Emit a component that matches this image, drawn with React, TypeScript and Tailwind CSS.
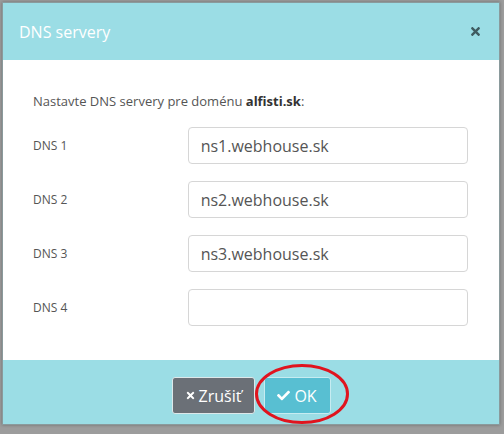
import { FaCheck, FaTimes } from 'react-icons/fa'

const servers = ['ns1.webhouse.sk', 'ns2.webhouse.sk', 'ns3.webhouse.sk', '']

export default function App() {
  return (
    <div
      className="w-[504px] h-[434px] bg-[#9c9c9c] pl-[2px] pr-[4px] pt-[2px] pb-[9px] overflow-hidden"
      style={{ fontFamily: '"Open Sans", "Liberation Sans", sans-serif' }}
    >
      <div className="relative h-full flex flex-col border border-[#8a9a9c] shadow-[0_0_3px_rgba(0,0,0,0.3)]">
        {/* header */}
        <div className="h-[57px] shrink-0 bg-[#9bdde5] flex items-center justify-between pl-[16px] pr-[17px]">
          <h2 className="text-[16px] text-white">DNS servery</h2>
          <FaTimes className="text-[#3f5b60] w-[13px] h-[13px]" />
        </div>

        {/* body */}
        <div className="h-[300px] shrink-0 bg-white pl-[30px] pr-[31px] pt-[31px]">
          <p className="text-[13px] leading-[20px] text-[#555]">
            Nastavte DNS servery pre doménu <b className="font-bold text-[#333]">alfisti.sk</b>:
          </p>
          <div className="mt-[16px] flex flex-col gap-[17px]">
            {servers.map((s, i) => (
              <div key={i} className="flex items-center">
                <label className="w-[155px] text-[12px] text-[#555]">DNS {i + 1}</label>
                <div className="w-[281px] h-[37px] rounded-[4px] border border-[#d6d6d6] flex items-center px-[12px] text-[16px] text-[#555]">
                  {s}
                </div>
              </div>
            ))}
          </div>
        </div>

        {/* footer */}
        <div className="flex-1 bg-[#9bdde5] flex justify-center gap-[9px] pt-[17px]">
          <button className="h-[37px] w-[83px] rounded-[3px] bg-[#6b7077] border border-[#dde8ea] text-white text-[16px] flex items-center justify-center gap-[3px]">
            <FaTimes className="w-[11px] h-[11px]" />
            Zrušiť
          </button>
          <button className="relative h-[37px] w-[67px] rounded-[3px] bg-[#58bfd2] border border-[#c6ecf1] text-white text-[16px] flex items-center justify-center gap-[4px]">
            <FaCheck className="w-[13px] h-[13px]" />
            OK
            <svg
              className="absolute left-[-12px] top-[-16px] pointer-events-none"
              width="100"
              height="66"
              viewBox="0 0 100 66"
            >
              <ellipse cx="49" cy="32" rx="45.5" ry="28.5" fill="none" stroke="#e0141e" strokeWidth="3" />
            </svg>
          </button>
        </div>
      </div>
    </div>
  )
}
